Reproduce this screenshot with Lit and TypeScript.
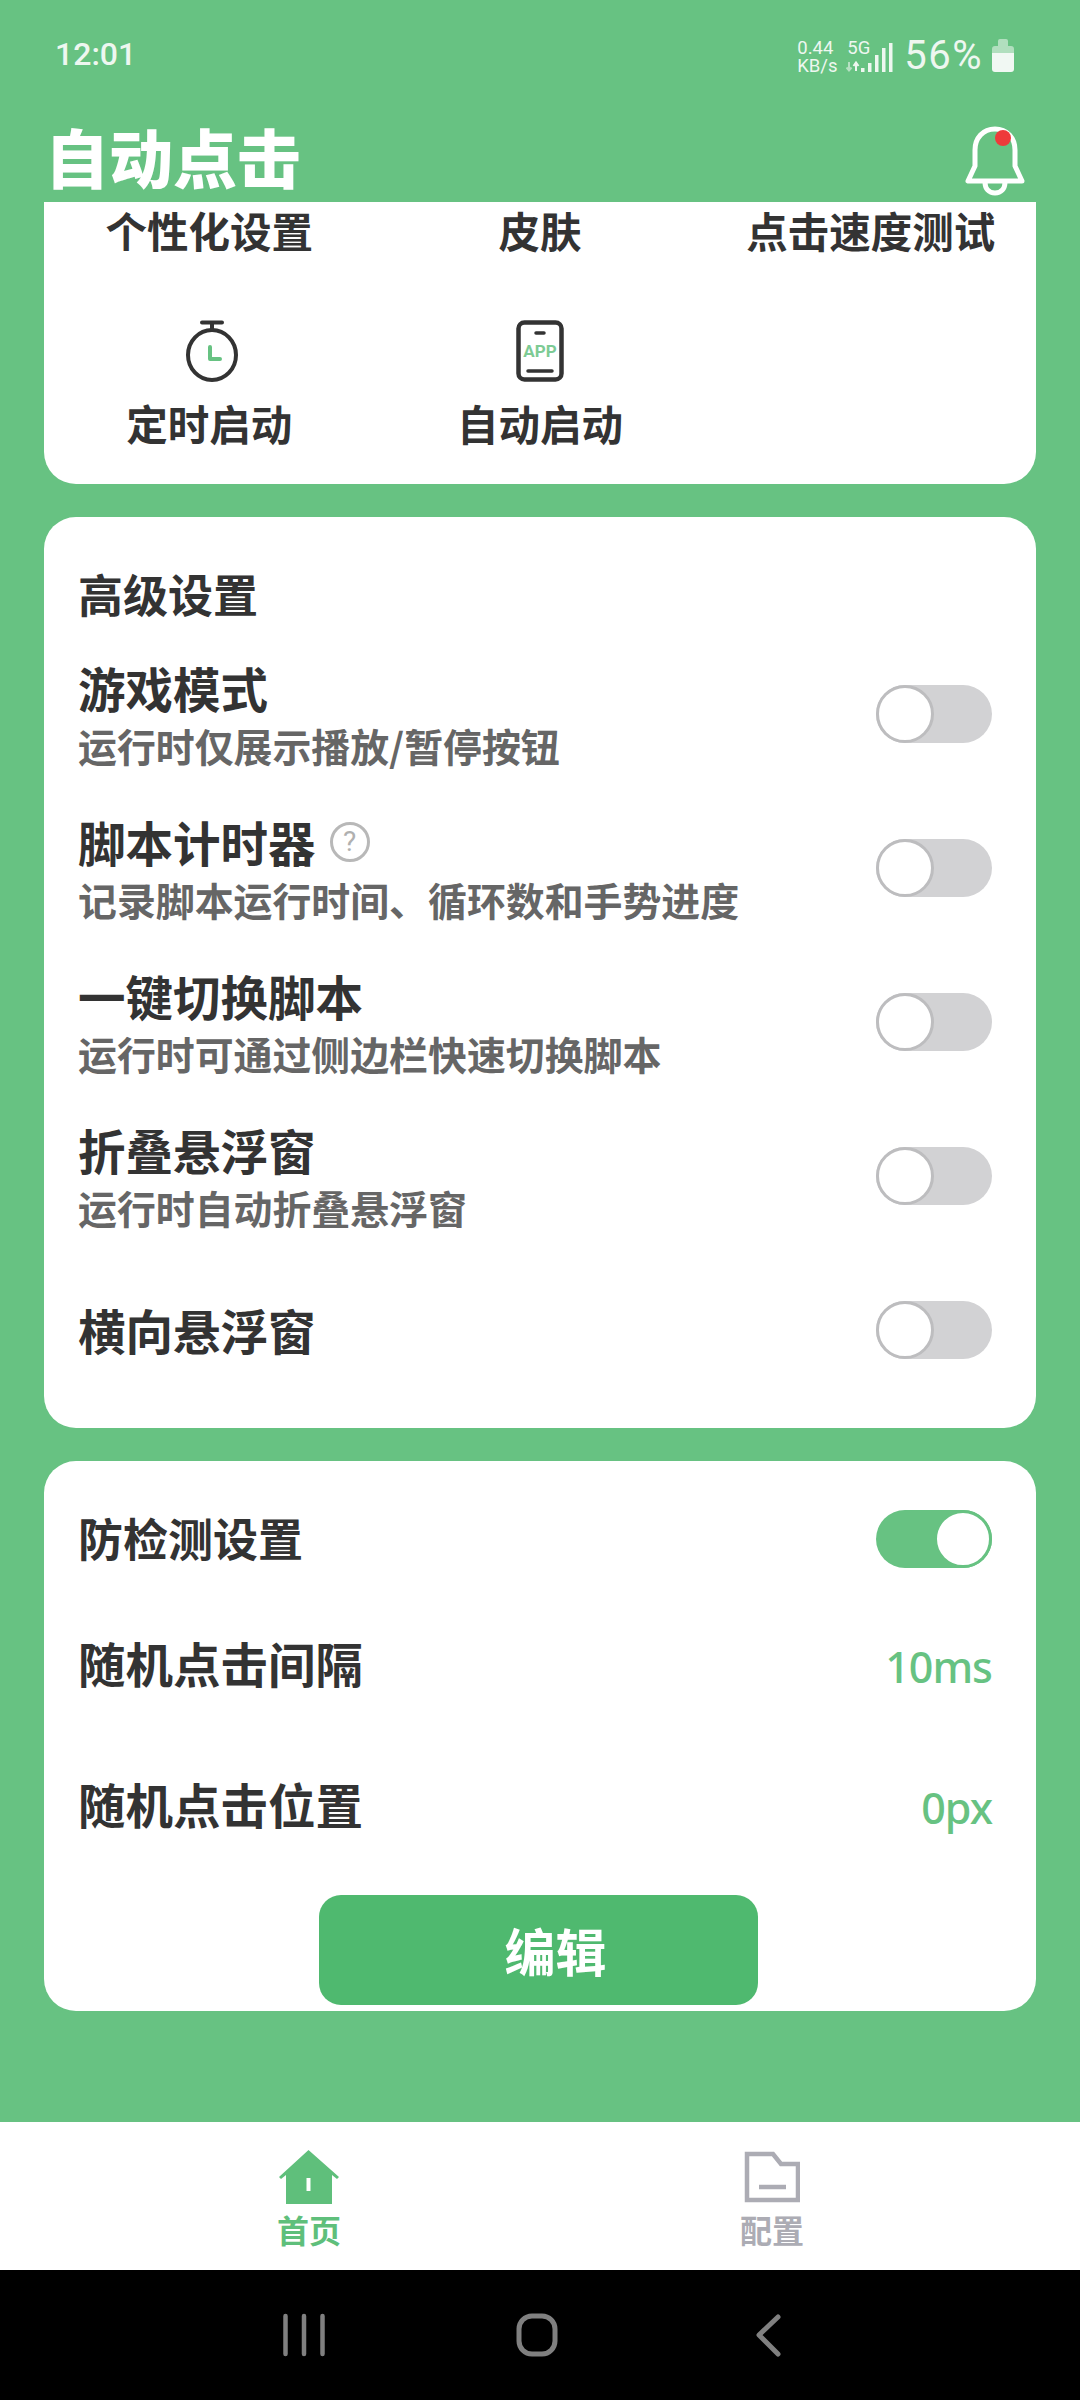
import { LitElement, html, css } from "lit";
import { customElement } from "lit/decorators.js";

const GREEN = "#67c282";

@customElement("app-root")
export class AppRoot extends LitElement {
  static styles = css`
    :host { display: block; font-family: "Noto Sans CJK SC", "Noto Sans", sans-serif; --green: #67c282; }
    .app { display: flex; flex-direction: column; height: 2400px; background: var(--green); color: #333; overflow: hidden; }
    svg { display: block; }

    .status { height: 108px; flex: none; display: flex; align-items: flex-start; justify-content: space-between; padding: 0 66px 0 55px; color: #eef7f0; font-family: Roboto, sans-serif; box-sizing: border-box; }
    .time { font-size: 32px; font-weight: 500; line-height: 38px; margin-top: 35px; }
    .status-right { display: flex; align-items: flex-start; margin-top: 39px; }
    .speed { font-size: 18.5px; line-height: 18px; width: 49px; white-space: nowrap; }
    .net { width: 50px; height: 34px; position: relative; font-size: 18.5px; line-height: 18px; padding-left: 1px; box-sizing: border-box; }
    .net svg { position: absolute; left: 0; top: 0; }
    .pct { font-size: 40px; letter-spacing: 1.5px; line-height: 44px; margin: -5px 9px 0 8px; }

    .header { height: 94px; flex: none; display: flex; justify-content: space-between; padding: 18px 55px 0 45px; box-sizing: border-box; }
    .title { font-size: 64px; font-weight: 900; color: #fff; line-height: 78px; margin-top: -10px; }

    .main { flex: 1; display: flex; flex-direction: column; gap: 33px; padding: 0 44px; }
    .card { background: #fff; border-radius: 32px; }

    .shortcuts { border-radius: 0 0 32px 32px; height: 282px; box-sizing: border-box; display: grid; grid-template-columns: repeat(3, 1fr); grid-template-rows: 56px auto; row-gap: 62px; }
    .shortcut { display: flex; flex-direction: column; align-items: center; font-size: 41.5px; font-weight: 700; line-height: 56px; color: #333; white-space: nowrap; }
    .ico { height: 62px; margin-bottom: 13px; }
    .ico.watch { transform: translateX(3px); }

    .settings { padding: 47px 44px 22px 34px; height: 911px; box-sizing: border-box; }
    .anti { padding: 48px 44px 5px 34px; height: 550px; box-sizing: border-box; display: flex; flex-direction: column; }
    .sec { font-size: 45px; font-weight: 700; line-height: 60px; color: #333; }
    .sec-row { height: 60px; display: flex; align-items: center; justify-content: space-between; }
    .sec-row .sec { line-height: 58px; padding-bottom: 2px; }
    .settings .sec { margin-bottom: 13px; }
    .row { height: 154px; display: flex; align-items: center; justify-content: space-between; }
    .two { padding-top: 2px; }
    .t { font-size: 47.5px; font-weight: 700; line-height: 58px; display: flex; align-items: center; color: #333; white-space: nowrap; }
    .s { font-size: 38.9px; font-weight: 700; line-height: 52px; margin-top: 2px; color: #666; white-space: nowrap; }
    .help { margin-left: 14px; width: 40px; height: 40px; box-sizing: border-box; border: 3px solid #b8b8b8; border-radius: 50%; color: #b0b0b0; font-size: 28px; font-weight: 400; line-height: 33px; text-align: center; font-family: Roboto, sans-serif; }

    .toggle { width: 116px; height: 58px; border-radius: 29px; background: #d2d2d4; position: relative; flex: none; }
    .toggle::after { content: ""; position: absolute; left: 0; top: 0; width: 58px; height: 58px; box-sizing: border-box; border-radius: 50%; background: #fff; border: 3px solid #bdbdbf; }
    .toggle.on { background: var(--green); }
    .toggle.on::after { left: 58px; border-color: var(--green); }

    .vrow { height: 141px; display: flex; align-items: center; justify-content: space-between; }
    .vrow .t { padding-bottom: 3px; }
    .vrow.first { margin-top: 25px; }
    .v { font-family: "Noto Sans", sans-serif; font-size: 43px; letter-spacing: -1px; font-weight: 500; color: var(--green); line-height: 50px; padding-top: 4px; }
    .btn { margin: 19px 0 0 241px; width: 439px; height: 110px; border-radius: 22px; background: #4fb96f; color: #fff; font-size: 51px; font-weight: 700; display: flex; align-items: center; justify-content: center; padding-left: 34px; box-sizing: border-box; }

    .tabs { flex: none; height: 148px; background: #fff; display: flex; padding-left: 209px; gap: 263px; box-sizing: border-box; }
    .tab { width: 200px; display: flex; flex-direction: column; align-items: center; padding-top: 28px; font-size: 32px; font-weight: 700; line-height: 46px; color: #acacb4; box-sizing: border-box; }
    .tab.active { color: #5fbf7b; }
    .tab svg { margin-bottom: 2px; }

    .sysnav { flex: none; height: 130px; background: #000; display: flex; }
  `;

  private toggle(on = false) {
    return html`<div class="toggle ${on ? "on" : ""}"></div>`;
  }

  private row(title: unknown, sub?: string) {
    return html`<div class="row">
      <div class="${sub ? "two" : ""}">
        <div class="t">${title}</div>
        ${sub ? html`<div class="s">${sub}</div>` : ""}
      </div>
      ${this.toggle()}
    </div>`;
  }

  private statusIcons() {
    return html`<div class="net">5G
      <svg width="50" height="34" viewBox="0 0 50 34">
        <path d="M3 23v8M0.500 28.500 3 31.500 5.500 28.500" fill="none" stroke="#b5e0c2" stroke-width="2"/>
        <path d="M10 32v-8M7.500 27 10 23.500 12.500 27" fill="none" stroke="#eef7f0" stroke-width="2"/>
        <g fill="#eef7f0">
          <rect x="15" y="29" width="3.500" height="4"/>
          <rect x="22" y="24" width="3.500" height="9"/>
          <rect x="29" y="16" width="3.500" height="17"/>
          <rect x="36" y="9" width="3.500" height="24"/>
          <rect x="43" y="4" width="3.500" height="29"/>
        </g>
      </svg>
    </div>`;
  }

  render() {
    return html`<div class="app">
      <div class="status">
        <div class="time">12:01</div>
        <div class="status-right">
          <div class="speed">0.44<br />KB/s</div>
          ${this.statusIcons()}
          <div class="pct">56%</div>
          <svg width="22" height="33" viewBox="0 0 22 33">
            <path d="M6 7V2a2 2 0 0 1 2-2h6a2 2 0 0 1 2 2v5h3a3 3 0 0 1 3 3v4H0v-4a3 3 0 0 1 3-3z" fill="#eef7f0" opacity=".55"/>
            <path d="M0 14h22v16a3 3 0 0 1-3 3H3a3 3 0 0 1-3-3z" fill="#f1f8f3"/>
          </svg>
        </div>
      </div>

      <div class="header">
        <div class="title">自动点击</div>
        <svg width="60" height="70" viewBox="0 0 60 70">
          <path d="M3 55h54l-7-15V24C50 12 42 3 30 3S10 12 10 24v16z" fill="none" stroke="#fff" stroke-width="5" stroke-linejoin="round"/>
          <path d="M20 56c0 7 4 11 10 11s10-4 10-11" fill="none" stroke="#fff" stroke-width="5"/>
          <circle cx="38" cy="12" r="8" fill="#ee3a3a"/>
        </svg>
      </div>

      <div class="main">
        <div class="card shortcuts">
          <div class="shortcut">个性化设置</div>
          <div class="shortcut">皮肤</div>
          <div class="shortcut">点击速度测试</div>
          <div class="shortcut">
            <svg class="ico watch" width="56" height="62" viewBox="0 0 56 62">
              <ellipse cx="28" cy="35" rx="24" ry="25" fill="none" stroke="#333" stroke-width="4"/>
              <path d="M18 2.500h20M28 2.500v7" fill="none" stroke="#333" stroke-width="4" stroke-linecap="round"/>
              <path d="M26 27v12h10" fill="none" stroke="${GREEN}" stroke-width="4" stroke-linecap="round" stroke-linejoin="round"/>
            </svg>
            定时启动
          </div>
          <div class="shortcut">
            <svg class="ico" width="48" height="62" viewBox="0 0 48 62">
              <rect x="2.500" y="2.500" width="43" height="57" rx="6" fill="none" stroke="#333" stroke-width="4.500"/>
              <path d="M20 13h8M12 51h24" stroke="#333" stroke-width="3.500" stroke-linecap="round"/>
              <text x="24" y="37" text-anchor="middle" font-size="17" font-weight="700" font-family="Roboto, sans-serif" fill="${GREEN}" opacity=".85">APP</text>
            </svg>
            自动启动
          </div>
        </div>

        <div class="card settings">
          <div class="sec">高级设置</div>
          ${this.row("游戏模式", "运行时仅展示播放/暂停按钮")}
          ${this.row(html`脚本计时器<span class="help">?</span>`, "记录脚本运行时间、循环数和手势进度")}
          ${this.row("一键切换脚本", "运行时可通过侧边栏快速切换脚本")}
          ${this.row("折叠悬浮窗", "运行时自动折叠悬浮窗")}
          ${this.row("横向悬浮窗")}
        </div>

        <div class="card anti">
          <div class="sec-row">
            <div class="sec">防检测设置</div>
            ${this.toggle(true)}
          </div>
          <div class="vrow first"><div class="t">随机点击间隔</div><div class="v">10ms</div></div>
          <div class="vrow"><div class="t">随机点击位置</div><div class="v">0px</div></div>
          <div class="btn">编辑</div>
        </div>
      </div>

      <div class="tabs">
        <div class="tab active">
          <svg width="62" height="54" viewBox="0 0 62 54">
            <path fill-rule="evenodd" d="M30.500 0 61 27l-2 2-5-4v29H8V25l-5 4-2-2zM28.500 28v13h4V28z" fill="#5fbf7b"/>
          </svg>
          首页
        </div>
        <div class="tab">
          <svg width="56" height="54" viewBox="0 0 56 54">
            <path d="M3 4h26l8 10h17v36H3z" fill="none" stroke="#acacb4" stroke-width="4.500"/>
            <path d="M15 37h27" stroke="#acacb4" stroke-width="4.500"/>
          </svg>
          配置
        </div>
      </div>

      <div class="sysnav">
        <svg width="1080" height="130" viewBox="0 0 1080 130">
          <path d="M285.500 46v38M304 46v38M322.500 46v38" stroke="#808080" stroke-width="4.500" stroke-linecap="round"/>
          <rect x="519" y="46" width="36" height="38" rx="13" fill="none" stroke="#808080" stroke-width="5"/>
          <path d="M778 47 759 65l19 19" fill="none" stroke="#808080" stroke-width="5" stroke-linecap="round" stroke-linejoin="round"/>
        </svg>
      </div>
    </div>`;
  }
}
